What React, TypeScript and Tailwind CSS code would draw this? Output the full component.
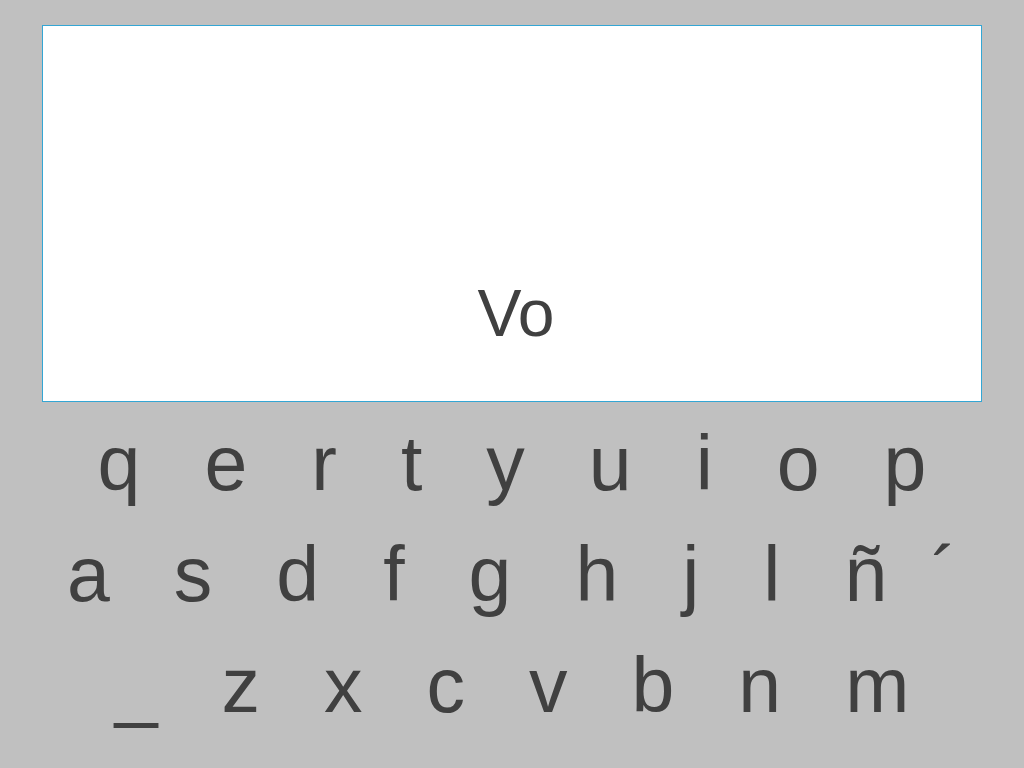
import React from "react";

const rows: string[][] = [
  ["q", "e", "r", "t", "y", "u", "i", "o", "p"],
  ["a", "s", "d", "f", "g", "h", "j", "l", "ñ", "´"],
  ["_", "z", "x", "c", "v", "b", "n", "m"],
];

const App: React.FC = () => {
  return (
    <div
      id="screen"
      className="flex h-[768px] w-[1024px] flex-col overflow-hidden bg-[#c0c0c0] font-['Liberation_Sans',Arial,sans-serif] text-[#404040]"
    >
      <div id="display" className="px-[42px] pt-[25px]">
        <div className="flex h-[377px] w-full flex-col items-center justify-end border border-[#34a6d4] bg-white pb-[55px]">
          <span className="pl-[8px] text-[66px] leading-none">Vo</span>
        </div>
      </div>

      <div id="keyboard" className="mt-[6px] flex flex-col">
        {rows.map((row, i) => (
          <div
            key={i}
            className="flex h-[111px] items-center justify-center gap-[64px] text-[77px] leading-[111px]"
          >
            {row.map((k) => (
              // the accent key sits closer to ñ
              <span key={k} className={k === "´" ? "-ml-[20px]" : ""}>
                {k}
              </span>
            ))}
          </div>
        ))}
      </div>
    </div>
  );
};

export default App;
